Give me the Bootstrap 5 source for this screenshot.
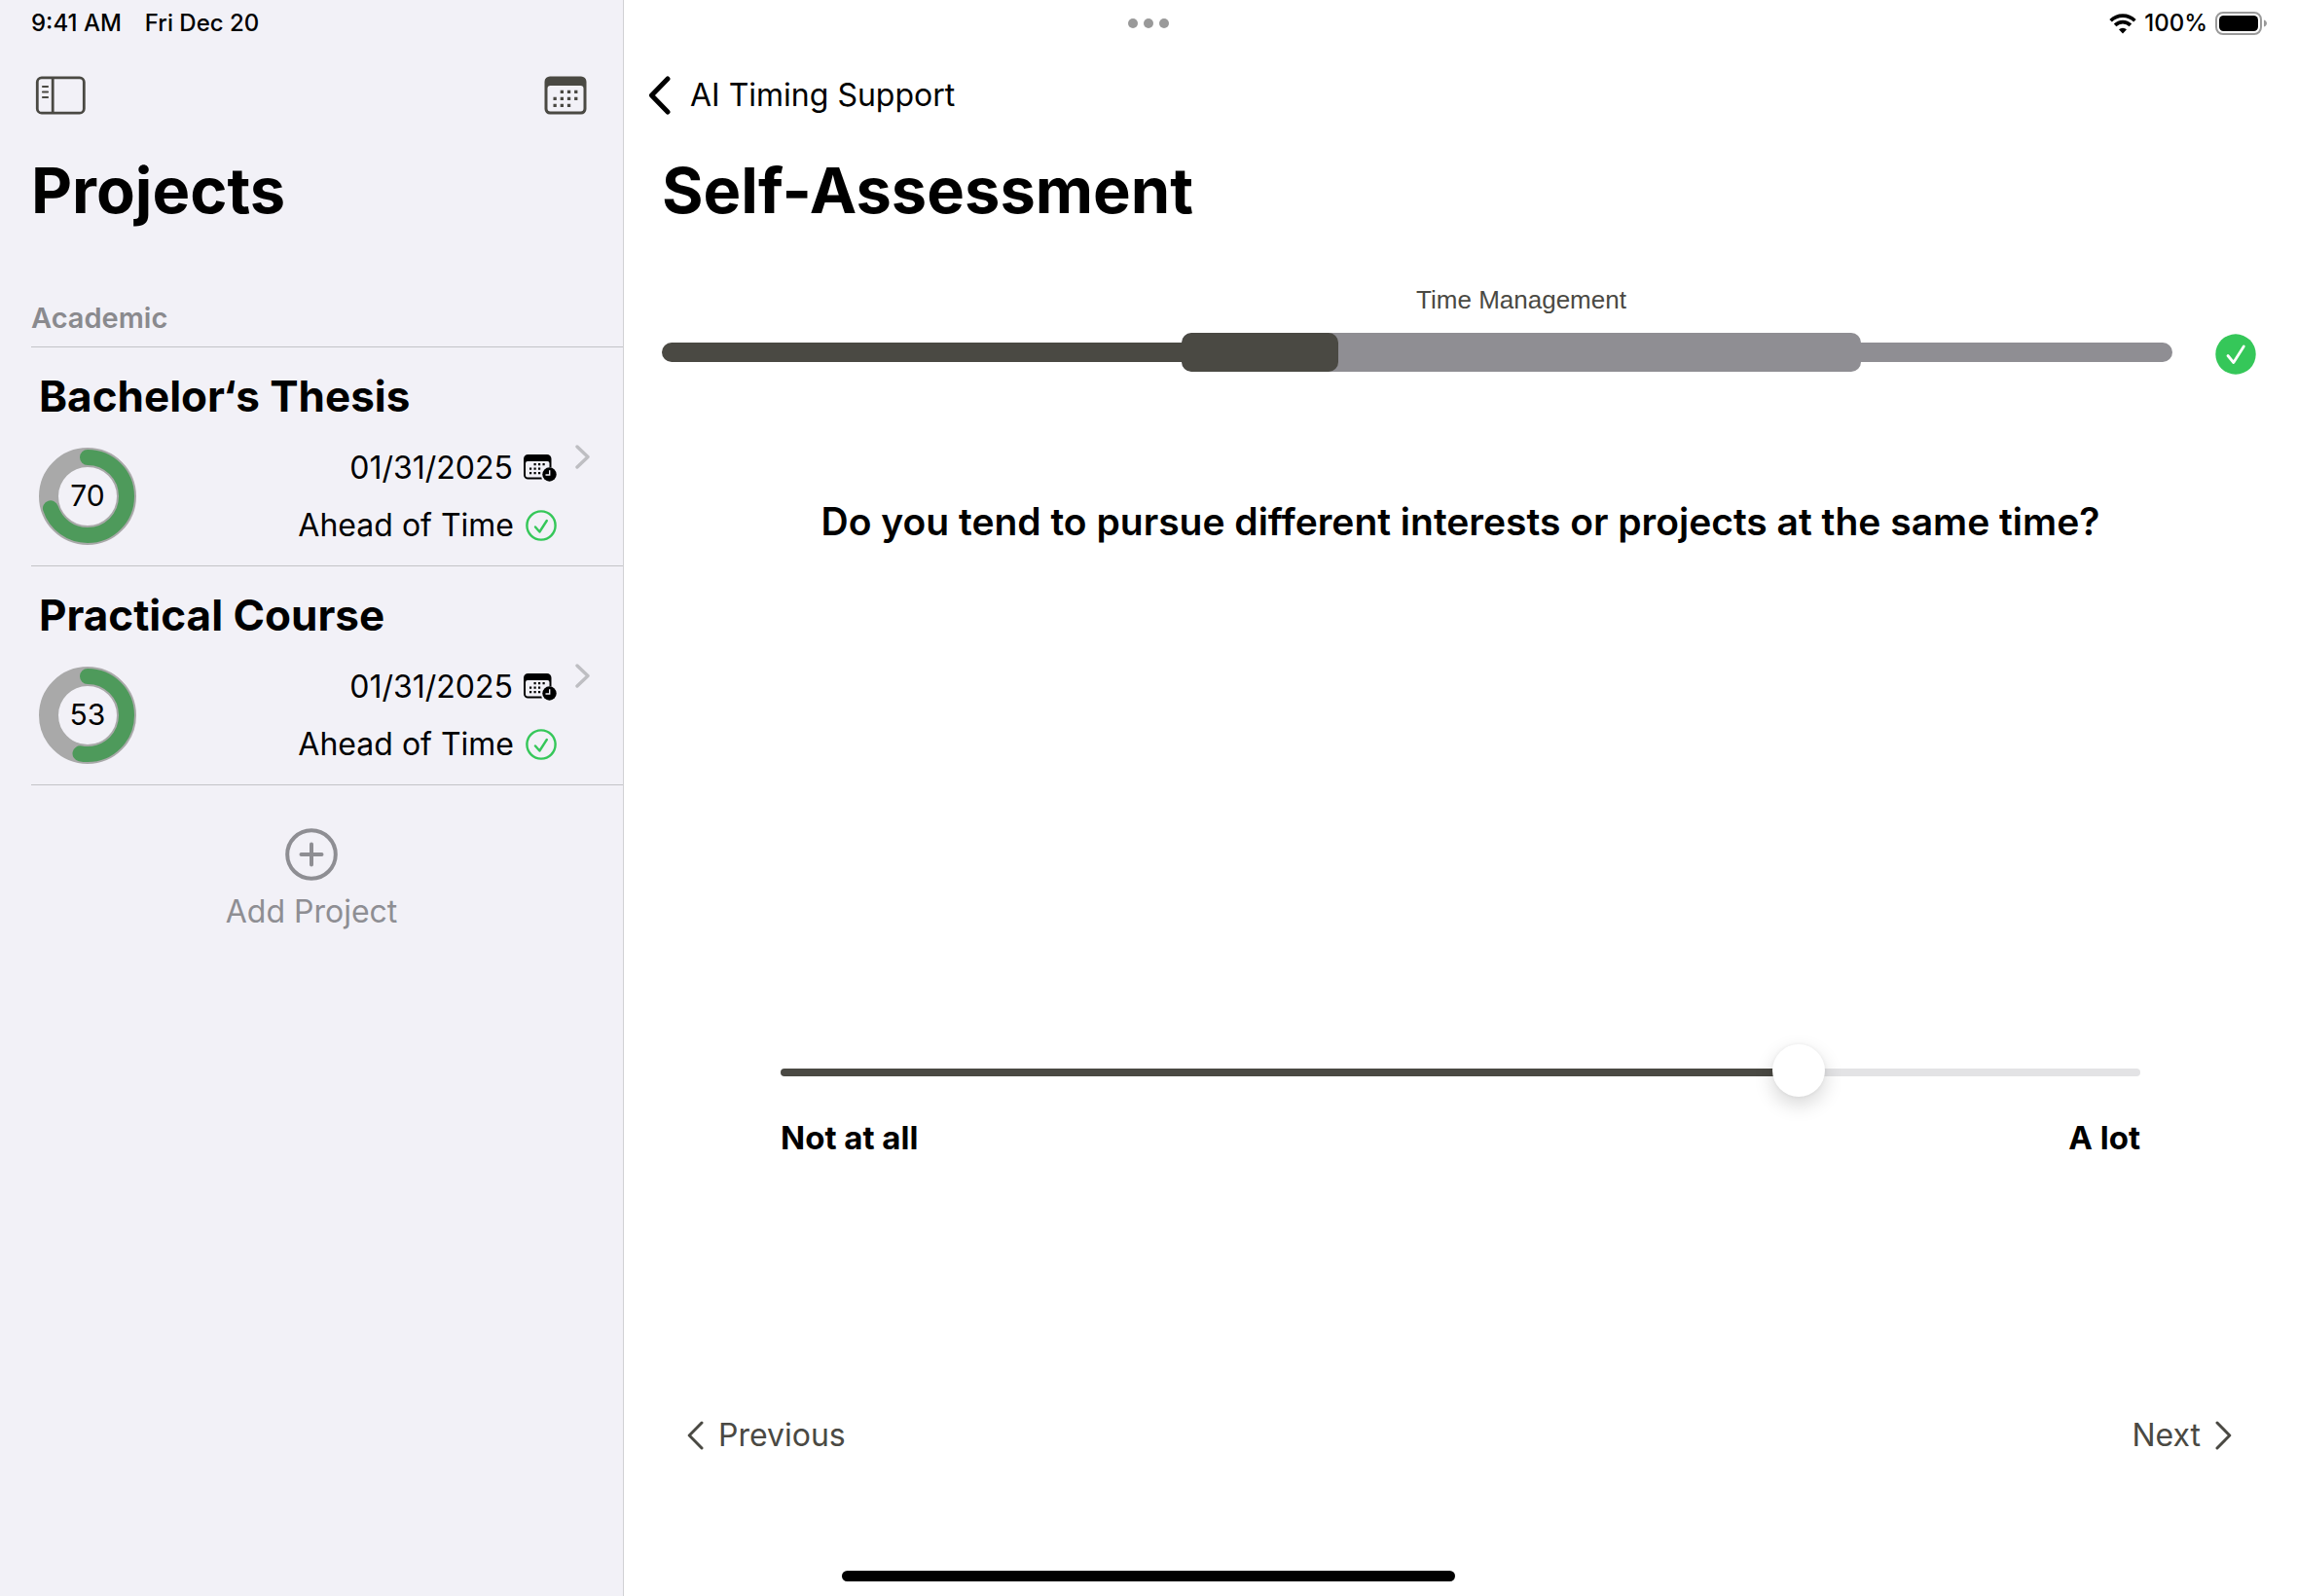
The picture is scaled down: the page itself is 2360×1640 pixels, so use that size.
<!DOCTYPE html>
<html lang="en">
<head>
<meta charset="utf-8">
<meta name="viewport" content="width=device-width, initial-scale=1">
<title>Self-Assessment</title>
<link href="https://cdn.jsdelivr.net/npm/bootstrap@5.3.0/dist/css/bootstrap.min.css" rel="stylesheet">
<style>
  :root { --ink: #4a4943; --soft: #8e8e93; --rule: #c3c3c7; }
  body { font-family: Inter, "Liberation Sans", sans-serif; font-size: 32px; line-height: 44px; color: #000; background: #fff; }
  svg { display: block; flex: none; }
  a, button { color: inherit; text-decoration: none; }
  .plain-btn { background: none; border: 0; padding: 0; }
  .status { height: 48px; font-size: 24px; line-height: 48px; font-weight: 500; }
  .status-icons { padding-right: 30px; }
  .toolbar { height: 60px; margin-top: 20px; }
  .page-title { font-size: 65px; line-height: 80px; font-weight: 700; margin: 28px 0 0; }
  .ink { color: var(--ink); }
  .soft { color: var(--soft); }

  .side { flex: 0 0 641px; background: #f2f1f7; border-right: 1px solid #d0d0d4; padding-left: 32px; }
  .side-bar { padding: 0 37px 0 4px; }
  .group-name { font-size: 29px; line-height: 40px; font-weight: 600; margin: 71px 0 0; padding-bottom: 9px; border-bottom: 1px solid var(--rule); color: #8a8a8e; }
  .project { padding: 22px 34px 12px 8px; border-bottom: 1px solid var(--rule); }
  .project-name { font-size: 44px; line-height: 56px; font-weight: 700; margin: 0 0 16px; }
  .ring-text { font-size: 30px; }
  .facts { line-height: 59px; }
  .fact { gap: 11px; }
  .go { margin: 6px 0 0 19px; }
  .add-row { padding: 44px 32px 0 0; }
  .add { gap: 10px; }

  .back { margin-left: 25px; gap: 20px; }
  .main-title { padding-left: 39px; }
  .steps { display: grid; grid-template-columns: 534fr 698fr 320fr 86px; align-items: center; margin-top: 56px; padding: 0 42px 0 39px; row-gap: 14px; }
  .step-name { grid-column: 2; font: 26px/32px "Liberation Sans", sans-serif; }
  .step { height: 20px; background: #8f8e93; }
  .step-done { background: var(--ink); border-radius: 10px 0 0 10px; grid-column: 1; }
  .step-now { height: 40px; border-radius: 10px; overflow: hidden; }
  .step-fill { height: 40px; background: var(--ink); border-radius: 10px; }
  .step-last { border-radius: 0 10px 10px 0; }
  .finish { padding-top: 5px; }
  .question { font-size: 39px; line-height: 50px; font-weight: 600; margin: 126px 0 512px; }
  .answer { padding: 0 161px; }
  .ends { font-size: 33px; font-weight: 700; }
  .slider { -webkit-appearance: none; appearance: none; display: block; width: 100%; height: 58px; margin: 0 0 16px; background: none; }
  .slider::-webkit-slider-runnable-track { height: 8px; border-radius: 4px; background: linear-gradient(90deg, var(--ink) var(--fill), #e3e3e5 var(--fill)); }
  .slider::-webkit-slider-thumb { -webkit-appearance: none; width: 54px; height: 54px; margin-top: -25px; border-radius: 50%; background: #fff; box-shadow: 0 8px 20px rgba(0,0,0,.16), 0 0 4px rgba(0,0,0,.06); }
  .pager { padding: 0 67px 143px 65px; }
  .pager-btn { gap: 15px; }
  .multitask { top: 19px; }
  .home-bar { width: 630px; height: 11px; bottom: 15px; background: #000; }
</style>
</head>
<body>
<div class="d-flex min-vh-100 position-relative">

  <aside class="side d-flex flex-column">
    <div class="status d-flex"><span>9:41 AM</span><span class="ms-4">Fri Dec 20</span></div>
    <div class="toolbar side-bar d-flex align-items-center justify-content-between">
      <button class="plain-btn ink" aria-label="Toggle sidebar">
        <svg width="52" height="40" viewBox="0 0 52 40" fill="none" stroke="currentColor" stroke-width="2.8">
          <rect x="2.3" y="1.8" width="48" height="36.4" rx="4.5"/><path d="M18.2 2v36"/>
          <path d="M8 11h5M8 16.500h5M8 22h5" stroke-width="2.200" stroke-linecap="round"/>
        </svg>
      </button>
      <button class="plain-btn ink" aria-label="Calendar">
        <svg width="44" height="40" viewBox="0 0 44 40">
          <path fill="currentColor" fill-rule="evenodd" d="M6 .5h32a5.500 5.500 0 0 1 5.500 5.500v28a5.500 5.500 0 0 1-5.500 5.500H6A5.500 5.500 0 0 1 .5 34V6A5.500 5.500 0 0 1 6 .5zM6.500 10A3 3 0 0 0 3.500 13v20.500a3 3 0 0 0 3 3h31a3 3 0 0 0 3-3V13a3 3 0 0 0-3-3z"/>
          <g stroke="currentColor" stroke-width="3.300" stroke-dasharray="3.300 3.900"><path d="M16.700 16.300h18M9.500 23.300h25.200M9.500 30.300h18"/></g>
        </svg>
      </button>
    </div>
    <h1 class="page-title">Projects</h1>

    <h2 class="group-name">Academic</h2>
    <ul class="list-unstyled m-0">
      <li>
        <a href="#thesis" class="project d-block">
          <h3 class="project-name">Bachelor‘s Thesis</h3>
          <div class="d-flex align-items-center">
            <svg width="100" height="100" viewBox="0 0 100 100" fill="none">
              <circle cx="50" cy="50" r="40" stroke="#a9a9a9" stroke-width="20"/>
              <circle cx="50" cy="50" r="40" stroke="#4e9a5b" stroke-width="16" stroke-linecap="round" pathLength="100" stroke-dasharray="70 100" transform="rotate(-90 50 50)"/>
              <text class="ring-text" x="50" y="60" text-anchor="middle" fill="#000">70</text>
            </svg>
            <div class="facts d-flex flex-column align-items-end ms-auto">
              <div class="fact d-flex align-items-center">01/31/2025
                <svg width="34" height="28" viewBox="0 0 34 28"><use href="#due"/></svg>
              </div>
              <div class="fact d-flex align-items-center">Ahead of Time
                <svg width="33" height="32" viewBox="0 0 33 32"><use href="#ok"/></svg>
              </div>
            </div>
            <svg class="go align-self-start" width="15" height="25" viewBox="0 0 15 25"><path d="M2 2l11 10.500L2 23" fill="none" stroke="#bebec2" stroke-width="3.400" stroke-linecap="round" stroke-linejoin="round"/></svg>
          </div>
        </a>
      </li>
      <li>
        <a href="#course" class="project d-block">
          <h3 class="project-name">Practical Course</h3>
          <div class="d-flex align-items-center">
            <svg width="100" height="100" viewBox="0 0 100 100" fill="none">
              <circle cx="50" cy="50" r="40" stroke="#a9a9a9" stroke-width="20"/>
              <circle cx="50" cy="50" r="40" stroke="#4e9a5b" stroke-width="16" stroke-linecap="round" pathLength="100" stroke-dasharray="53 100" transform="rotate(-90 50 50)"/>
              <text class="ring-text" x="50" y="60" text-anchor="middle" fill="#000">53</text>
            </svg>
            <div class="facts d-flex flex-column align-items-end ms-auto">
              <div class="fact d-flex align-items-center">01/31/2025
                <svg width="34" height="28" viewBox="0 0 34 28"><use href="#due"/></svg>
              </div>
              <div class="fact d-flex align-items-center">Ahead of Time
                <svg width="33" height="32" viewBox="0 0 33 32"><use href="#ok"/></svg>
              </div>
            </div>
            <svg class="go align-self-start" width="15" height="25" viewBox="0 0 15 25"><path d="M2 2l11 10.500L2 23" fill="none" stroke="#bebec2" stroke-width="3.400" stroke-linecap="round" stroke-linejoin="round"/></svg>
          </div>
        </a>
      </li>
    </ul>
    <div class="add-row text-center">
      <button class="plain-btn add soft d-inline-flex flex-column align-items-center">
        <svg width="54" height="54" viewBox="0 0 54 54" fill="none" stroke="currentColor" stroke-width="4" stroke-linecap="round"><circle cx="27" cy="27" r="24.800"/><path d="M27 16.500v21M16.500 27h21"/></svg>
        <span>Add Project</span>
      </button>
    </div>
  </aside>

  <main class="d-flex flex-column flex-grow-1">
    <div class="status status-icons d-flex align-items-center justify-content-end">
      <svg class="me-2" width="28" height="22" viewBox="0 0 28 22" fill="none" stroke="#000" stroke-width="3.600">
        <path d="M1.600 8.200a17.600 17.600 0 0 1 24.800 0"/><path d="M6.100 12.900a11.200 11.200 0 0 1 15.800 0"/>
        <path d="M14 21.500l-4-4.200a5.800 5.800 0 0 1 8 0z" fill="#000" stroke="none"/>
      </svg>
      <span>100%</span>
      <svg class="ms-2" width="54" height="24" viewBox="0 0 54 24"><rect x="1" y="1" width="46" height="22" rx="7" fill="none" stroke="#9a9a9a" stroke-width="2"/><rect x="4" y="4" width="40" height="16" rx="4.500"/><path d="M50 8.500c4 1.200 4 5.800 0 7z" fill="#9a9a9a"/></svg>
    </div>
    <nav class="toolbar d-flex align-items-center">
      <a href="#support" class="back d-inline-flex align-items-center">
        <svg width="23" height="40" viewBox="0 0 23 40"><path d="M20 3L3.500 20 20 37" fill="none" stroke="#000" stroke-width="5" stroke-linecap="round" stroke-linejoin="round"/></svg>
        AI Timing Support
      </a>
    </nav>
    <h1 class="page-title main-title">Self-Assessment</h1>

    <div class="steps">
      <div class="step-name ink text-center">Time Management</div>
      <div class="step step-done"></div>
      <div class="step step-now"><div class="step-fill" style="width:23%"></div></div>
      <div class="step step-last"></div>
      <div class="finish d-flex justify-content-end">
        <svg width="42" height="42" viewBox="0 0 42 42"><circle cx="21" cy="21" r="20.700" fill="#35c759"/><path d="M13 22.500l5.800 7L29.300 13" fill="none" stroke="#fff" stroke-width="2.800" stroke-linecap="round" stroke-linejoin="round"/></svg>
      </div>
    </div>

    <h2 class="question text-center" id="question">Do you tend to pursue different interests or projects at the same time?</h2>

    <div class="answer">
      <input class="slider" type="range" min="0" max="1" step="any" value="0.7586" aria-labelledby="question" style="--fill:75%">
      <div class="ends d-flex justify-content-between"><span>Not at all</span><span>A lot</span></div>
    </div>

    <div class="pager ink d-flex justify-content-between mt-auto">
      <button class="plain-btn pager-btn d-inline-flex align-items-center">
        <svg width="17" height="30" viewBox="0 0 17 30"><path d="M15 2L2.200 15 15 28" fill="none" stroke="currentColor" stroke-width="3" stroke-linecap="round" stroke-linejoin="round"/></svg>
        Previous
      </button>
      <button class="plain-btn pager-btn d-inline-flex align-items-center">
        Next
        <svg width="17" height="30" viewBox="0 0 17 30"><path d="M2 2l12.800 13L2 28" fill="none" stroke="currentColor" stroke-width="3" stroke-linecap="round" stroke-linejoin="round"/></svg>
      </button>
    </div>
  </main>

  <!-- system overlays -->
  <svg class="multitask position-absolute start-50 translate-middle-x" width="43" height="10" viewBox="0 0 43 10" fill="#999"><circle cx="5.500" cy="5" r="5"/><circle cx="21.500" cy="5" r="5"/><circle cx="37.500" cy="5" r="5"/></svg>
  <div class="home-bar position-absolute start-50 translate-middle-x rounded-pill"></div>
</div>

<!-- shared icons -->
<svg width="0" height="0" class="position-absolute" aria-hidden="true">
  <symbol id="due" viewBox="0 0 34 28">
    <path fill-rule="evenodd" d="M4.500 0h19.500A4.500 4.500 0 0 1 28.500 4.500v9a8 8 0 0 0-2-.3V9a2 2 0 0 0-2-2H4a2 2 0 0 0-2 2v12.500a2 2 0 0 0 2 2h14.300a8 8 0 0 0 .6 2H4.500A4.500 4.500 0 0 1 0 21V4.500A4.500 4.500 0 0 1 4.500 0z"/>
    <path d="M10.500 10.200h13M6 14.700h13M6 19.200h11.500" stroke="#000" stroke-width="2.200" stroke-dasharray="2.200 2.300"/>
    <circle cx="26.500" cy="20.500" r="7.200"/><path d="M26.700 16.300v4.700h-4.200" fill="none" stroke="#f2f1f7" stroke-width="1.400"/>
  </symbol>
  <symbol id="ok" viewBox="0 0 33 32">
    <circle cx="17" cy="16" r="14.600" fill="none" stroke="#35c759" stroke-width="2.400"/>
    <path d="M11 17.500l4.400 5L22.800 11" fill="none" stroke="#35c759" stroke-width="2.400" stroke-linecap="round" stroke-linejoin="round"/>
  </symbol>
</svg>
<script src="https://cdn.jsdelivr.net/npm/bootstrap@5.3.0/dist/js/bootstrap.bundle.min.js"></script>
</body>
</html>
